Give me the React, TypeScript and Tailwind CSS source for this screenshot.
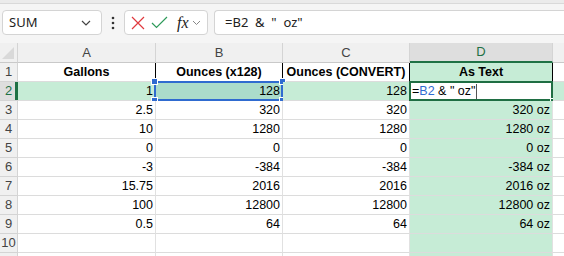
import React from "react";

const cols = [
  { w: 138, label: "A" },
  { w: 127, label: "B" },
  { w: 127, label: "C" },
  { w: 143, label: "D" },
  { w: 40, label: "E" },
];

const data: string[][] = [
  ["Gallons", "Ounces (x128)", "Ounces (CONVERT)", "As Text"],
  ["1", "128", "128", ""],
  ["2.5", "320", "320", "320 oz"],
  ["10", "1280", "1280", "1280 oz"],
  ["0", "0", "0", "0 oz"],
  ["-3", "-384", "-384", "-384 oz"],
  ["15.75", "2016", "2016", "2016 oz"],
  ["100", "12800", "12800", "12800 oz"],
  ["0.5", "64", "64", "64 oz"],
  ["", "", "", ""],
  ["", "", "", ""],
];

const GREEN = "bg-[#c6ecd6]";

function Handle({ cls }: { cls: string }) {
  return (
    <div
      className={`absolute w-[7px] h-[7px] bg-[#2f6bd0] border border-white ${cls}`}
    />
  );
}

export default function App() {
  return (
    <div
      className="w-[564px] h-[256px] overflow-hidden bg-[#f5f5f5] relative"
      style={{ fontFamily: '"Liberation Sans", Arial, sans-serif' }}
    >
      {/* top strip */}
      <div className="h-[4px] bg-[#ebebeb] border-b border-[#d9d9d9]" />
      {/* formula bar */}
      <div
        className="flex items-center h-[25px] mt-[6px] pl-[2px]"
        style={{ fontFamily: '"Noto Sans", "Open Sans", sans-serif' }}
      >
        <div className="w-[100px] h-[25px] bg-white border border-[#d4d4d4] rounded-[4px] flex items-center justify-between pl-[6px] pr-[10px] text-[13px] text-[#222]">
          <span>SUM</span>
          <svg width="10" height="6" viewBox="0 0 10 6">
            <path d="M1 1 L5 5 L9 1" fill="none" stroke="#444" strokeWidth="1.2" />
          </svg>
        </div>
        <div className="w-[22px] flex justify-center">
          <svg width="4" height="14" viewBox="0 0 4 14">
            <circle cx="2" cy="2" r="1.3" fill="#333" />
            <circle cx="2" cy="7" r="1.3" fill="#333" />
            <circle cx="2" cy="12" r="1.3" fill="#333" />
          </svg>
        </div>
        <div className="w-[84px] h-[25px] bg-white border border-[#d4d4d4] rounded-[4px] flex items-center pl-[5px]">
          <svg width="14" height="14" viewBox="0 0 14 14" className="ml-[1px]">
            <path d="M1 1 L13 13 M13 1 L1 13" stroke="#e0393e" strokeWidth="1.2" />
          </svg>
          <svg width="17" height="13" viewBox="0 0 17 13" className="ml-[6px]">
            <path d="M1 7 L5.5 11.5 L16 1" fill="none" stroke="#2e9a5a" strokeWidth="1.2" />
          </svg>
          <span
            className="ml-[9px] text-[16px] italic text-[#222] leading-none"
            style={{ fontFamily: '"Liberation Serif", "Times New Roman", serif' }}
          >
            fx
          </span>
          <svg width="9" height="6" viewBox="0 0 9 6" className="ml-[3px]">
            <path d="M1 1 L4.5 4.5 L8 1" fill="none" stroke="#888" strokeWidth="1" />
          </svg>
        </div>
        <div className="ml-[6px] flex-1 h-[25px] bg-white border border-[#d4d4d4] border-r-0 rounded-l-[4px] flex items-center pl-[10px] text-[13px] text-[#222] whitespace-pre">
          {'=B2  &  "  oz"'}
        </div>
      </div>

      {/* sheet */}
      <div className="mt-[8px] bg-white">
        {/* column header */}
        <div className="flex h-[20px] bg-[#f0f0f0] text-[13px] text-[#444]">
          <div className="w-[18px] h-[20px] border-r border-[#d4d4d4] border-b border-b-[#c9c9c9] relative shrink-0">
            <svg width="14" height="14" viewBox="0 0 14 14" className="absolute right-[2px] bottom-[2px]">
              <path d="M13 1 L13 13 L1 13 Z" fill="#d9d9d9" />
            </svg>
          </div>
          {cols.map((c) =>
            c.label === "D" ? (
              <div
                key={c.label}
                className="shrink-0 h-[20px] bg-[#dedede] border-r border-[#d4d4d4] border-b-2 border-b-[#1f7145] text-[#1f7145] flex items-center justify-center"
                style={{ width: c.w }}
              >
                {c.label}
              </div>
            ) : (
              <div
                key={c.label}
                className="shrink-0 h-[20px] border-r border-[#d4d4d4] border-b border-b-[#c9c9c9] flex items-center justify-center"
                style={{ width: c.w }}
              >
                {c.label === "E" ? "" : c.label}
              </div>
            )
          )}
        </div>
        {/* rows */}
        {data.map((row, ri) => {
          const rn = ri + 1;
          const isFocusRow = rn === 2;
          const isHeader = rn === 1;
          return (
            <div key={ri} className="flex h-[19px]">
              <div
                className={`w-[18px] shrink-0 h-[19px] border-r border-b border-[#d4d4d4] flex items-center justify-center text-[13px] relative ${
                  isFocusRow ? "bg-[#dedede] text-[#1f7145]" : "bg-[#f0f0f0] text-[#444]"
                }`}
              >
                {rn <= 10 ? rn : ""}
                {isFocusRow && (
                  <div className="absolute right-[-1px] top-0 bottom-0 w-[3px] bg-[#1f7145]" />
                )}
              </div>
              {cols.map((c, ci) => {
                const v = ci < 4 ? row[ci] : "";
                const isD = ci === 3;
                const isB2 = isFocusRow && ci === 1;
                const isD2 = isFocusRow && isD;
                let bg = "bg-white";
                if (isFocusRow || isD) bg = GREEN;
                if (isB2) bg = "bg-[#abdccb]";
                if (isD2) bg = "bg-white";
                if (ci === 4 && !isFocusRow) bg = "bg-white";
                const headerBorder = isHeader && ci < 4 ? "border-r-black" : "border-r-[#e1e1e1]";
                return (
                  <div
                    key={ci}
                    className={`shrink-0 h-[19px] border-r border-b border-b-[#dcdcdc] ${headerBorder} ${bg} text-[12.5px] text-black flex items-center relative ${
                      isHeader ? "justify-center font-bold" : "justify-end pr-[2px]"
                    }`}
                    style={{ width: c.w }}
                  >
                    {isD2 ? null : v}
                    {isB2 && (
                      <>
                        <div className="absolute left-[-2px] top-[-1px] right-[-1px] bottom-[-1px] border-2 border-[#2f6bd0]" />
                        <Handle cls="left-[-5px] top-[-4px]" />
                        <Handle cls="right-[-4px] top-[-4px]" />
                        <Handle cls="left-[-5px] bottom-[-4px]" />
                        <Handle cls="right-[-4px] bottom-[-4px]" />
                      </>
                    )}
                    {isD2 && (
                      <>
                        <div className="absolute left-[-1px] top-[-1px] right-[-1px] bottom-[-1px] border-2 border-[#1f6e43] bg-white flex items-center pl-[1px] whitespace-pre text-[12.5px] text-black">
                          <span>=</span>
                          <span className="text-[#2f6bd0]">B2</span>
                          <span>{' & " oz"'}</span>
                          <span className="inline-block w-[1px] h-[15px] bg-[#555] ml-[1px]" />
                        </div>
                        <div className="absolute right-[-4px] bottom-[-4px] w-[6px] h-[6px] bg-[#1f6e43] border border-white" />
                      </>
                    )}
                  </div>
                );
              })}
            </div>
          );
        })}
      </div>
    </div>
  );
}
